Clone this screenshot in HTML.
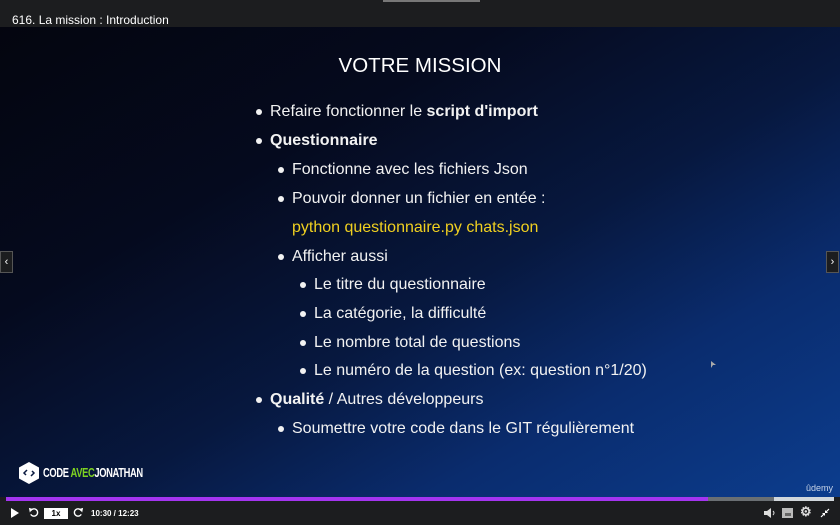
<!DOCTYPE html>
<html><head><meta charset="utf-8"><style>
*{margin:0;padding:0;box-sizing:border-box}
body{width:840px;height:525px;overflow:hidden;background:#1c1d1f;font-family:"Liberation Sans",sans-serif;position:relative}
.top{position:absolute;left:0;top:0;width:840px;height:27px;background:#1c1d1f;color:#fff;font-size:12px}
.top span{position:absolute;left:12px;top:13px}
.slide{position:absolute;left:0;top:27px;width:840px;height:470px;
background:linear-gradient(150deg,#04050f 0%,#050a1e 30%,#07183f 55%,#0a2c6e 75%,#0c3d8e 100%)}
.t{position:absolute;color:#f2f2f2;font-size:16px;white-space:nowrap;line-height:18px}
.b{position:absolute;width:6px;height:6px;border-radius:50%;background:#f2f2f2}
.title{position:absolute;left:0;width:840px;top:54px;text-align:center;color:#fff;font-size:20.5px}
.prog{position:absolute;top:497px;height:4px}
.ctrl{position:absolute;left:0;top:501px;width:840px;height:24px;background:#1c1d1f;color:#fff;font-size:8px;font-weight:bold}
.nav{position:absolute;top:251px;width:13px;height:22px;background:#1c1d1f;border:1px solid #555;color:#fff;font-size:11px;text-align:center;line-height:20px}
</style></head><body>
<div class="top"><span>616. La mission : Introduction</span></div>
<div style="position:absolute;left:383px;top:0;width:97px;height:2px;background:#777"></div>
<div class="slide"></div>
<div class="title">VOTRE MISSION</div>

<div class="b" style="left:256px;top:109px"></div><div class="t" style="left:270px;top:103px">Refaire fonctionner le <b>script d'import</b></div>
<div class="b" style="left:256px;top:138px"></div><div class="t" style="left:270px;top:132px"><b>Questionnaire</b></div>
<div class="b" style="left:278px;top:167px"></div><div class="t" style="left:292px;top:161px">Fonctionne avec les fichiers Json</div>
<div class="b" style="left:278px;top:196px"></div><div class="t" style="left:292px;top:190px">Pouvoir donner un fichier en entée :</div>
<div class="t" style="left:292px;top:219px;color:#f0d020">python questionnaire.py chats.json</div>
<div class="b" style="left:278px;top:254px"></div><div class="t" style="left:292px;top:248px">Afficher aussi</div>
<div class="b" style="left:300px;top:282px"></div><div class="t" style="left:314px;top:276px">Le titre du questionnaire</div>
<div class="b" style="left:300px;top:311px"></div><div class="t" style="left:314px;top:305px">La catégorie, la difficulté</div>
<div class="b" style="left:300px;top:340px"></div><div class="t" style="left:314px;top:334px">Le nombre total de questions</div>
<div class="b" style="left:300px;top:368px"></div><div class="t" style="left:314px;top:362px">Le numéro de la question (ex: question n°1/20)</div>
<div class="b" style="left:256px;top:397px"></div><div class="t" style="left:270px;top:391px"><b>Qualité</b> / Autres développeurs</div>
<div class="b" style="left:278px;top:426px"></div><div class="t" style="left:292px;top:420px">Soumettre votre code dans le GIT régulièrement</div>

<svg style="position:absolute;left:17px;top:461px" width="24" height="24" viewBox="0 0 24 24"><polygon points="12,1 22,6.5 22,17.5 12,23 2,17.5 2,6.5" fill="#fff"/><path d="M9 14l-2-2 3-3M15 10l2 2-3 3" stroke="#0a1a40" stroke-width="1.5" fill="none"/></svg>
<div style="position:absolute;left:43px;top:465px;font-size:13px;font-weight:bold;color:#fff;letter-spacing:-0.5px;transform:scaleX(0.72);transform-origin:left">CODE <span style="color:#7ed321">AVEC</span>JONATHAN</div>
<div style="position:absolute;left:806px;top:483px;font-size:9px;color:#c8d4e8">ûdemy</div>

<div class="nav" style="left:0">‹</div>
<div class="nav" style="left:826px">›</div>

<div class="prog" style="left:6px;width:702px;background:#a435f0"></div>
<div class="prog" style="left:708px;width:66px;background:#6a6f73"></div>
<div class="prog" style="left:774px;width:60px;background:#d1d7dc"></div>

<div class="ctrl">
<svg style="position:absolute;left:10px;top:7px" width="10" height="10"><polygon points="1,0 9,5 1,10" fill="#fff"/></svg>
<svg style="position:absolute;left:28px;top:6px" width="11" height="11" viewBox="0 0 12 12"><path d="M3 4a4 4 0 1 1 0 4" stroke="#fff" stroke-width="1.5" fill="none"/><polygon points="1,1 5,2 2,6" fill="#fff"/></svg>
<div style="position:absolute;left:44px;top:7px;width:24px;height:11px;background:#fff;color:#000;text-align:center;line-height:11px">1x</div>
<svg style="position:absolute;left:73px;top:6px" width="11" height="11" viewBox="0 0 12 12"><path d="M9 4a4 4 0 1 0 0 4" stroke="#fff" stroke-width="1.5" fill="none"/><polygon points="11,1 7,2 10,6" fill="#fff"/></svg>
<div style="position:absolute;left:91px;top:8px">10:30 / 12:23</div>
<svg style="position:absolute;left:764px;top:7px" width="11" height="10"><polygon points="0,3 3,3 7,0 7,10 3,7 0,7" fill="#ddd"/><path d="M9 3q2 2 0 4" stroke="#ddd" fill="none"/></svg>
<div style="position:absolute;left:782px;top:7px;width:11px;height:10px;background:#bbb"><div style="position:absolute;left:3px;top:5px;width:6px;height:3px;background:#666"></div></div>
<div style="position:absolute;left:800px;top:3px;font-size:13px;color:#ddd">⚙</div>
<svg style="position:absolute;left:820px;top:7px" width="10" height="10"><path d="M1 9l3-3M6 4l3-3" stroke="#fff" stroke-width="1.2"/><polygon points="2,5 5,5 5,8" fill="#fff"/><polygon points="5,2 5,5 8,5" fill="#fff"/></svg>
</div>
<svg style="position:absolute;left:711px;top:361px" width="6" height="8"><polygon points="0,0 5,4 2,4 0,7" fill="#aaa"/></svg>
</body></html>
